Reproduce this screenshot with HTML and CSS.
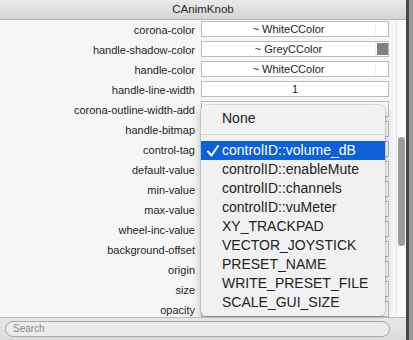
FILE: index.html
```html
<!DOCTYPE html>
<html lang="en">
<head>
	<meta charset="utf-8">
	<title>CAnimKnob</title>
	<link rel="stylesheet" href="styles.css">
</head>
<body>
	<div class="frame">
		<div class="window">
			<div class="titlebar">CAnimKnob</div>
			<div class="body">
				<div class="list">
					<div class="row"><span class="label">corona-color</span><span class="field"><span class="value">~ WhiteCColor</span><span class="swatch"><i class="white"></i></span></span></div>
					<div class="row"><span class="label">handle-shadow-color</span><span class="field"><span class="value">~ GreyCColor</span><span class="swatch"><i class="grey"></i></span></span></div>
					<div class="row"><span class="label">handle-color</span><span class="field"><span class="value">~ WhiteCColor</span><span class="swatch"><i class="white"></i></span></span></div>
					<div class="row"><span class="label">handle-line-width</span><span class="field"><span class="value">1</span></span></div>
					<div class="row"><span class="label">corona-outline-width-add</span><span class="field"><span class="value">0</span></span></div>
					<div class="row"><span class="label">handle-bitmap</span><span class="field"><span class="value"></span></span></div>
					<div class="row"><span class="label">control-tag</span><span class="field focus"><span class="value"></span></span></div>
					<div class="row"><span class="label">default-value</span><span class="field"><span class="value"></span></span></div>
					<div class="row"><span class="label">min-value</span><span class="field"><span class="value"></span></span></div>
					<div class="row"><span class="label">max-value</span><span class="field"><span class="value"></span></span></div>
					<div class="row"><span class="label">wheel-inc-value</span><span class="field"><span class="value"></span></span></div>
					<div class="row"><span class="label">background-offset</span><span class="field"><span class="value"></span></span></div>
					<div class="row"><span class="label">origin</span><span class="field"><span class="value"></span></span></div>
					<div class="row"><span class="label">size</span><span class="field"><span class="value"></span></span></div>
					<div class="row"><span class="label">opacity</span><span class="field"><span class="value"></span></span></div>

					<!-- popup menu of control-tag -->
					<div class="menu">
						<div class="item"><span class="mark"></span>None</div>
						<div class="sep"></div>
						<div class="item selected"><span class="mark"><svg width="12" height="12" viewBox="0 0 12 12"><path d="M1 6.5 L4.5 10.5 L11 1" fill="none" stroke="#fff" stroke-width="2" stroke-linecap="round" stroke-linejoin="round"/></svg></span>controlID::volume_dB</div>
						<div class="item"><span class="mark"></span>controlID::enableMute</div>
						<div class="item"><span class="mark"></span>controlID::channels</div>
						<div class="item"><span class="mark"></span>controlID::vuMeter</div>
						<div class="item"><span class="mark"></span>XY_TRACKPAD</div>
						<div class="item"><span class="mark"></span>VECTOR_JOYSTICK</div>
						<div class="item"><span class="mark"></span>PRESET_NAME</div>
						<div class="item"><span class="mark"></span>WRITE_PRESET_FILE</div>
						<div class="item"><span class="mark"></span>SCALE_GUI_SIZE</div>
					</div>
				</div>
				<div class="track"><div class="thumb"></div></div>
			</div>
			<div class="bottombar"><div class="search">Search</div></div>
		</div>
		<div class="edge"></div>
	</div>
</body>
</html>
```

FILE: styles.css
```css
* {padding: 0; margin: 0; box-sizing: border-box;}
body {
	width: 413px;
	height: 340px;
	overflow: hidden;
	font-family: "Liberation Sans", Arial, sans-serif;
	font-size: 11px;
	color: #1e1e1e;
	background: #8e8e8e;
}
.frame {
	display: flex;
	height: 340px;
}
.window {
	width: 406px;
	display: flex;
	flex-direction: column;
	background: #f6f6f6;
}
.edge {
	flex: 1;
	border-left: 3px solid #474747;
	background: #9a9a9a;
}
.titlebar {
	height: 20px;
	line-height: 19px;
	text-align: center;
	font-size: 11.5px;
	color: #2a2a2a;
	background: linear-gradient(#ebebeb, #d4d4d4);
	border-bottom: 1px solid #b4b4b4;
}
.body {
	flex: 1;
	display: flex;
	overflow: hidden;
}
.list {
	width: 396px;
	position: relative;
	overflow: hidden;
}
.row {
	height: 20px;
	display: grid;
	grid-template-columns: 195px 188px;
	column-gap: 6px;
	align-items: center;
}
.label {
	text-align: right;
	white-space: nowrap;
}
.field {
	height: 16px;
	margin-top: -2px;
	display: flex;
	background: #fff;
	border: 1px solid #bcbcbc;
}
.field.focus {
	border-color: #9dbce6;
}
.value {
	flex: 1;
	text-align: center;
	line-height: 14px;
}
.swatch {
	width: 13px;
	padding: 1px 0 1px 1px;
	border-left: 1px solid #f0f0f0;
}
.swatch i {
	display: block;
	height: 12px;
}
.swatch .white {background: #fff;}
.swatch .grey {background: #818181;}
.track {
	flex: 1;
	background: #fbfbfb;
	border-left: 1px solid #e6e6e6;
	padding-left: 1px;
}
.thumb {
	width: 7px;
	height: 109px;
	margin-top: 117px;
	border-radius: 4px;
	background: #9b9b9b;
}
.bottombar {
	height: 23px;
	padding: 3px 16px 0 5px;
	background: linear-gradient(#e6e6e6, #dcdcdc);
	border-top: 1px solid #bdbdbd;
}
.search {
	height: 16px;
	line-height: 14px;
	padding-left: 7px;
	font-size: 10px;
	color: #8a8a8a;
	border: 1px solid #a8a8a8;
	border-radius: 8px;
	background: #ececec;
}
.menu {
	position: absolute;
	left: 201px;
	top: 85px;
	width: 184px;
	padding: 4px 0;
	font-size: 14px;
	color: #222;
	background: #f1f1f1;
	border-radius: 5px;
	box-shadow: 0 0 0 1px rgba(0,0,0,0.1), 0 3px 10px rgba(0,0,0,0.28);
}
.item {
	height: 19px;
	line-height: 19px;
	display: flex;
	white-space: nowrap;
}
.mark {
	width: 21px;
	padding-left: 6px;
	display: flex;
	align-items: center;
}
.item.selected {
	background: #0d60d8;
	color: #fff;
}
.sep {
	height: 13px;
	padding-top: 6px;
}
.sep::before {
	content: "";
	display: block;
	height: 1px;
	background: #d6d6d6;
}
```
